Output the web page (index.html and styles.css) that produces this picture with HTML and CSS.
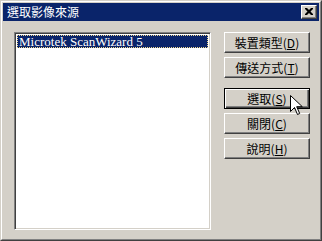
FILE: index.html
```html
<!DOCTYPE html>
<html lang="zh-Hant">

<head>
    <meta charset="UTF-8">
    <title>選取影像來源</title>
    <link rel="stylesheet" href="styles.css">
</head>

<body>
    <div class="window">
        <div class="frame">
            <div class="caption">
                <span class="title">選取影像來源</span>
                <span class="close-btn">
                    <svg width="8" height="7" viewBox="0 0 8 7">
                        <path d="M0 0h2l2 2 2-2h2v1L5.5 3.5 8 6v1H6L4 5 2 7H0V6l2.5-2.5L0 1z" fill="#000"/>
                    </svg>
                </span>
            </div>

            <div class="dialog-body">
                <div class="listbox">
                    <div class="list-item selected">Microtek ScanWizard 5</div>
                </div>

                <div class="buttons">
                    <button class="btn">裝置類型(<u>D</u>)</button>
                    <button class="btn">傳送方式(<u>T</u>)</button>
                    <button class="btn default first-of-group">選取(<u>S</u>)</button>
                    <button class="btn">關閉(<u>C</u>)</button>
                    <button class="btn">說明(<u>H</u>)</button>
                </div>
            </div>
        </div>

        <!-- mouse pointer over the 選取 button -->
        <svg class="pointer" width="13" height="21" viewBox="0 0 13 21">
            <path d="M0.5 0.5v16l4-4 3 7 2.2-1-3-6.8h5.6z" fill="#fff" stroke="#000" stroke-width="1"/>
        </svg>
    </div>
</body>

</html>
```

FILE: styles.css
```css
* {
    margin: 0;
    padding: 0;
    box-sizing: border-box;
}

body {
    font-family: "Noto Sans CJK TC", "Liberation Serif", serif;
    font-size: 12px;
    background-color: #d4d0c8;
    color: #000;
}

.window {
    position: relative;
    width: 322px;
    height: 241px;
    border: 1px solid;
    border-color: #d4d0c8 #404040 #404040 #d4d0c8;
    background: #d4d0c8;
}

.frame {
    height: 100%;
    border: 1px solid;
    border-color: #fff #808080 #808080 #fff;
    padding: 1px;
}

.caption {
    height: 18px;
    background: #0a246a;
    color: #fff;
    display: flex;
    align-items: center;
    justify-content: space-between;
    padding: 0 2px 0 4px;
}

.title {
    font-size: 12px;
    line-height: 18px;
    letter-spacing: 0;
}

.close-btn {
    width: 16px;
    height: 14px;
    background: #d4d0c8;
    border: 1px solid;
    border-color: #fff #404040 #404040 #fff;
    box-shadow: inset -1px -1px 0 #808080;
    display: flex;
    align-items: center;
    justify-content: center;
    padding: 0 1px 1px 0;
}

.dialog-body {
    display: flex;
    gap: 13px;
    padding: 11px 9px 0 11px;
}

.listbox {
    width: 197px;
    height: 198px;
    background: #fff;
    border: 1px solid;
    border-color: #808080 #fff #fff #808080;
    box-shadow: inset 1px 1px 0 #404040, inset -1px -1px 0 #d4d0c8;
    padding: 2px 2px;
}

.list-item {
    height: 13px;
    font-family: "Liberation Serif", serif;
    font-size: 13px;
    line-height: 11px;
    padding-left: 1px;
    white-space: nowrap;
}

.list-item.selected {
    background: #0a246a;
    color: #fff;
    border: 1px dotted #f0d890;
}

.buttons {
    display: flex;
    flex-direction: column;
    gap: 4px;
    width: 86px;
}

.btn {
    height: 21px;
    width: 100%;
    font-family: "Noto Sans CJK TC", "Liberation Sans", sans-serif;
    font-size: 12px;
    line-height: 17px;
    color: #000;
    background: #d4d0c8;
    border: 1px solid;
    border-color: #fff #404040 #404040 #fff;
    box-shadow: inset -1px -1px 0 #808080;
}

.btn u {
    text-decoration: underline;
}

.btn.default {
    border: 1px solid #000;
    box-shadow: inset 1px 1px 0 #fff, inset -1px -1px 0 #404040, inset -2px -2px 0 #808080;
}

.first-of-group {
    margin-top: 6px;
}

.pointer {
    position: absolute;
    left: 289px;
    top: 94px;
}
```
